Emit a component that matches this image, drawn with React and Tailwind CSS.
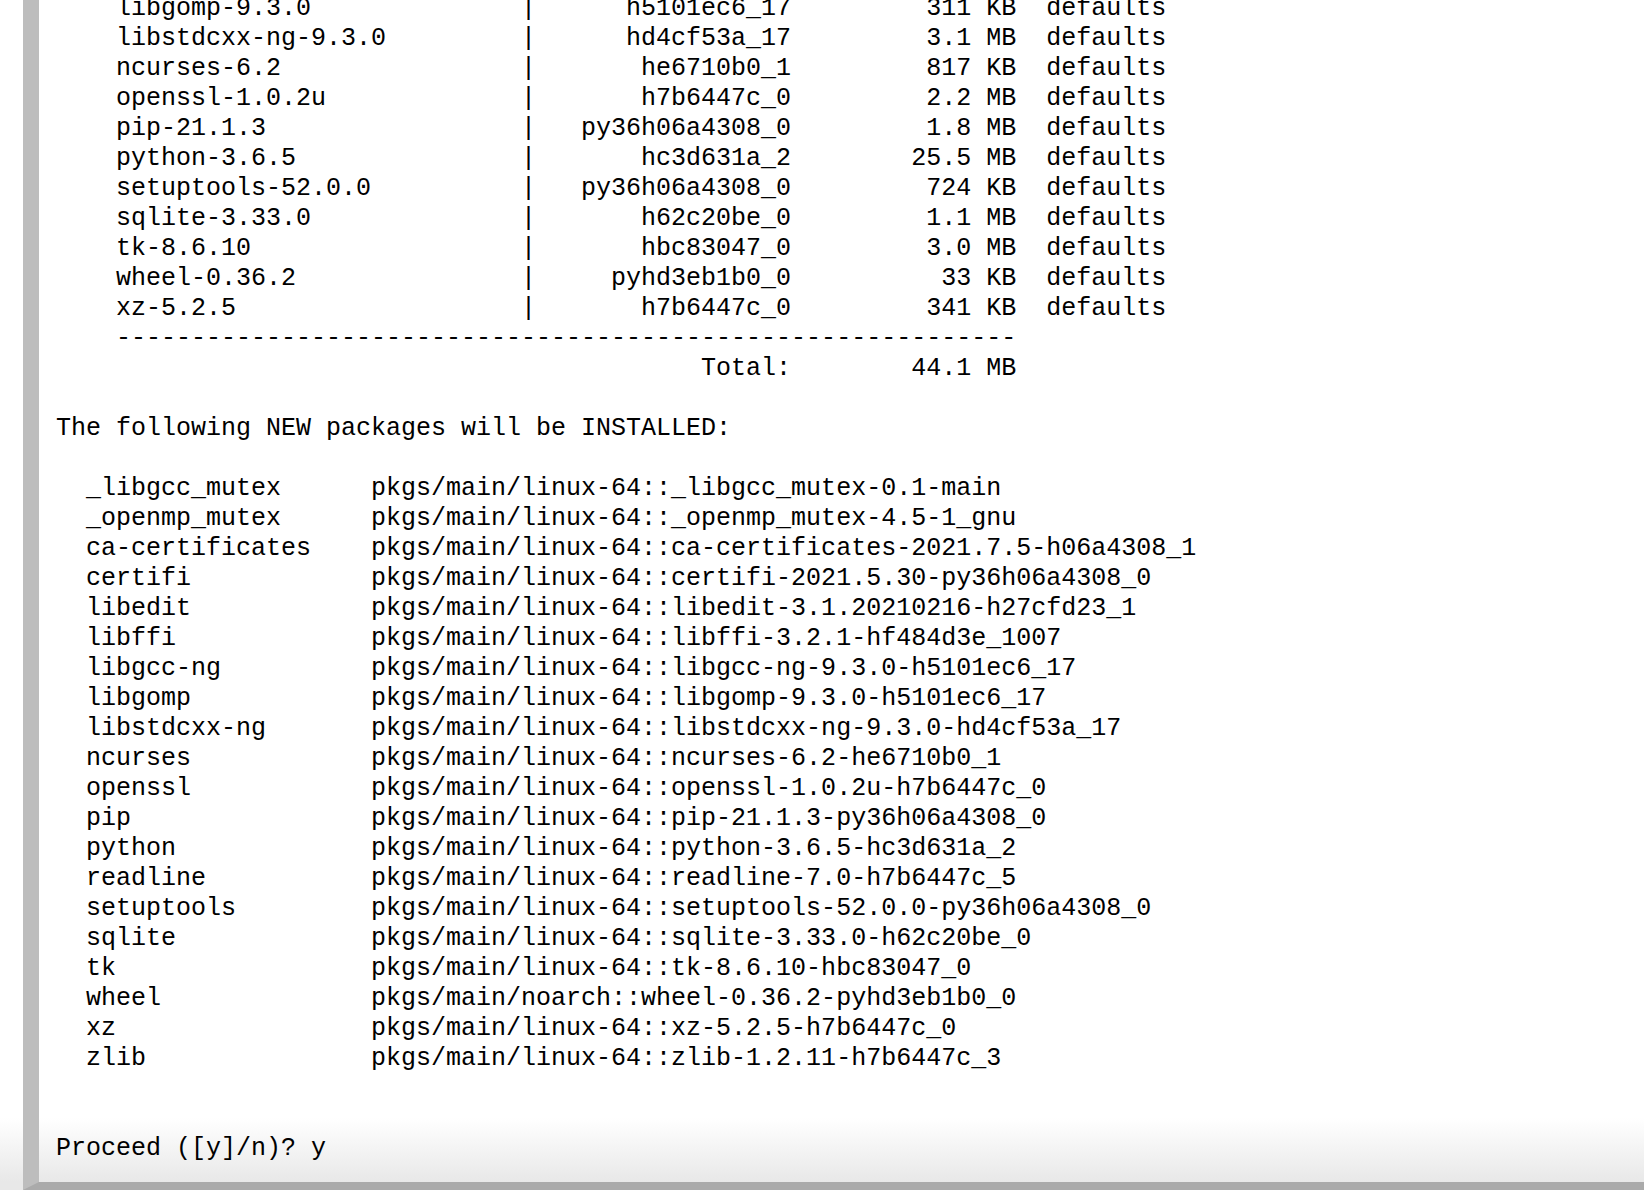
import React from "react";

const upgrades = [
    ["libgomp-9.3.0", "h5101ec6_17", "311 KB"],
    ["libstdcxx-ng-9.3.0", "hd4cf53a_17", "3.1 MB"],
    ["ncurses-6.2", "he6710b0_1", "817 KB"],
    ["openssl-1.0.2u", "h7b6447c_0", "2.2 MB"],
    ["pip-21.1.3", "py36h06a4308_0", "1.8 MB"],
    ["python-3.6.5", "hc3d631a_2", "25.5 MB"],
    ["setuptools-52.0.0", "py36h06a4308_0", "724 KB"],
    ["sqlite-3.33.0", "h62c20be_0", "1.1 MB"],
    ["tk-8.6.10", "hbc83047_0", "3.0 MB"],
    ["wheel-0.36.2", "pyhd3eb1b0_0", "33 KB"],
    ["xz-5.2.5", "h7b6447c_0", "341 KB"],
];

const installs = [
    ["_libgcc_mutex", "pkgs/main/linux-64::_libgcc_mutex-0.1-main"],
    ["_openmp_mutex", "pkgs/main/linux-64::_openmp_mutex-4.5-1_gnu"],
    ["ca-certificates", "pkgs/main/linux-64::ca-certificates-2021.7.5-h06a4308_1"],
    ["certifi", "pkgs/main/linux-64::certifi-2021.5.30-py36h06a4308_0"],
    ["libedit", "pkgs/main/linux-64::libedit-3.1.20210216-h27cfd23_1"],
    ["libffi", "pkgs/main/linux-64::libffi-3.2.1-hf484d3e_1007"],
    ["libgcc-ng", "pkgs/main/linux-64::libgcc-ng-9.3.0-h5101ec6_17"],
    ["libgomp", "pkgs/main/linux-64::libgomp-9.3.0-h5101ec6_17"],
    ["libstdcxx-ng", "pkgs/main/linux-64::libstdcxx-ng-9.3.0-hd4cf53a_17"],
    ["ncurses", "pkgs/main/linux-64::ncurses-6.2-he6710b0_1"],
    ["openssl", "pkgs/main/linux-64::openssl-1.0.2u-h7b6447c_0"],
    ["pip", "pkgs/main/linux-64::pip-21.1.3-py36h06a4308_0"],
    ["python", "pkgs/main/linux-64::python-3.6.5-hc3d631a_2"],
    ["readline", "pkgs/main/linux-64::readline-7.0-h7b6447c_5"],
    ["setuptools", "pkgs/main/linux-64::setuptools-52.0.0-py36h06a4308_0"],
    ["sqlite", "pkgs/main/linux-64::sqlite-3.33.0-h62c20be_0"],
    ["tk", "pkgs/main/linux-64::tk-8.6.10-hbc83047_0"],
    ["wheel", "pkgs/main/noarch::wheel-0.36.2-pyhd3eb1b0_0"],
    ["xz", "pkgs/main/linux-64::xz-5.2.5-h7b6447c_0"],
    ["zlib", "pkgs/main/linux-64::zlib-1.2.11-h7b6447c_3"],
];

// build the terminal lines the same way conda pads its columns
const lines = [
    ...upgrades.map(
        ([name, build, size]) =>
            "    " + name.padEnd(27) + "|" + build.padStart(17) + size.padStart(15) + "  defaults"
    ),
    "    " + "-".repeat(60),
    "Total:".padStart(49) + "44.1 MB".padStart(15),
    "",
    "The following NEW packages will be INSTALLED:",
    "",
    ...installs.map(([name, url]) => "  " + name.padEnd(19) + url),
    "",
    "",
    "Proceed ([y]/n)? y",
];

export default function App() {
    return (
        <div className="h-[1190px] w-full overflow-hidden pl-[23px] bg-[linear-gradient(to_bottom,#ffffff_1118px,#e8e8e8_1182px)]">
            <div className="h-full border-l-[16px] border-b-[8px] border-l-[#bdbdbd] border-b-[#aaaaaa] pl-[17px] overflow-hidden">
                <pre className="-mt-[6px] font-['Liberation_Mono',monospace] text-[25px] leading-[30px] text-black">
                    {lines.map((line, i) => (
                        <div key={i} className="h-[30px] whitespace-pre">
                            {line}
                        </div>
                    ))}
                </pre>
            </div>
        </div>
    );
}
